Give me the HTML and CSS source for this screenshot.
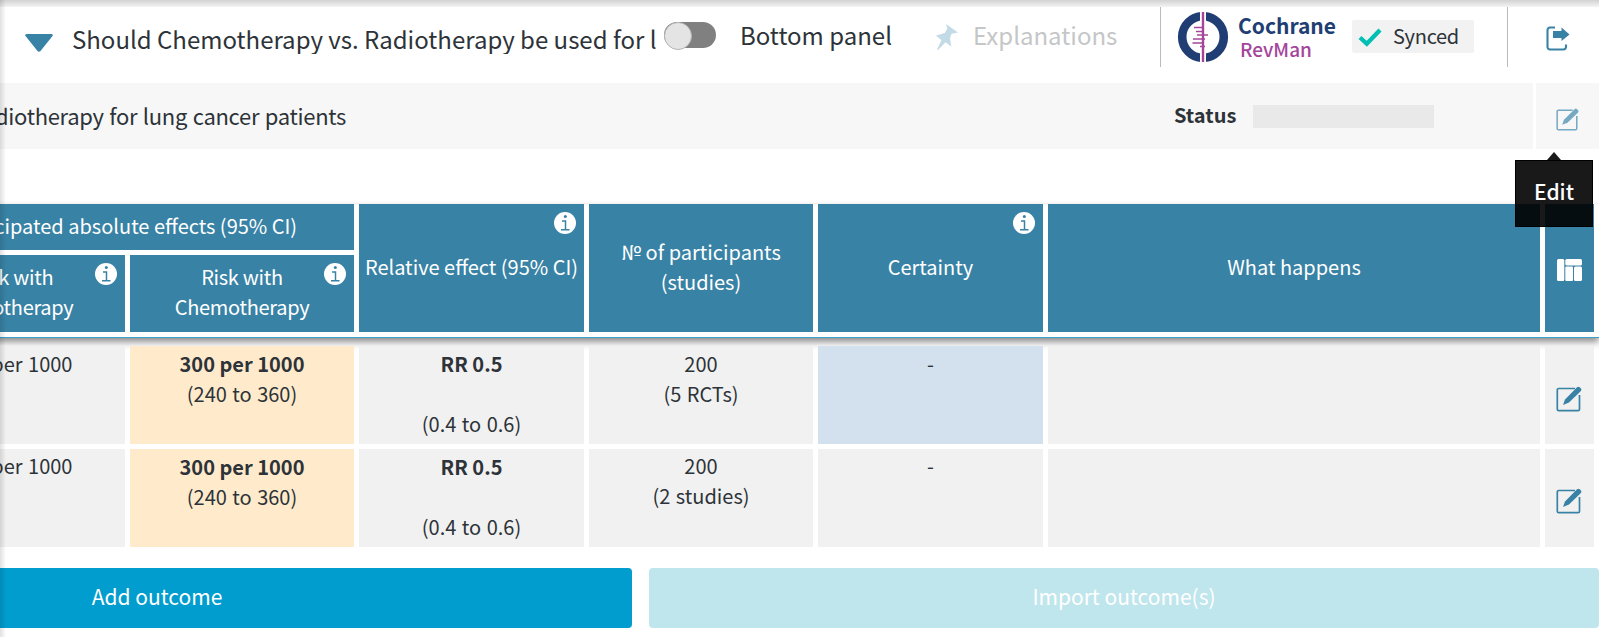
FILE: index.html
```html
<!DOCTYPE html>
<html lang="en">
<head>
  <meta charset="UTF-8">
  <title>Summary of findings</title>
  <link rel="stylesheet" href="styles.css">
</head>
<body>

  <!-- shared icons -->
  <svg class="sprite">
    <symbol id="icon-edit" viewBox="0 0 26 26">
      <path d="M23.5 9v14.2a1.5 1.5 0 0 1-1.5 1.5H2.8a1.5 1.5 0 0 1-1.5-1.5V4a1.5 1.5 0 0 1 1.5-1.5H19" fill="none" stroke="currentColor" stroke-width="1.7"/>
      <path d="M7 19l2-5.6L21 1.3q1.400-1.200 2.700 0l1.200 1.200q1.100 1.200 0 2.500L13 16.600z" fill="currentColor"/>
    </symbol>
    <symbol id="icon-info" viewBox="0 0 22 22">
      <circle cx="11" cy="11" r="11" fill="#fff"/>
      <circle cx="11.300" cy="4.500" r="1.500" fill="#3882a5"/>
      <path d="M8 9h3.500v8.500M7 17.700h8.500" fill="none" stroke="#3882a5" stroke-width="1.500"/>
    </symbol>
  </svg>

  <header class="topbar">
    <svg class="caret" viewBox="0 0 28 18"><path d="M1.500 0h25q2 .5 1 2L15.500 17q-1.500 1.500-3 0L.5 2q-1-1.500 1-2z" fill="#3882a5"/></svg>
    <div class="question">Should Chemotherapy vs. Radiotherapy be used for lung cancer patients</div>
    <div class="toggle"></div>
    <div class="toggle-label">Bottom panel</div>
    <div class="explanations">
      <svg class="pin" viewBox="0 0 22 26"><path d="M10 0L22 8.500l-6.500 1.200-1.500 4.500 1.300 8.300-5.800-4.200L2 26l-1-.8 4.500-8.900L0 11.500l8.700-2.400 2.600-4.300z" fill="currentColor"/></svg>
      <span>Explanations</span>
    </div>
    <div class="revman">
      <svg class="logo" viewBox="0 0 52 50">
        <circle cx="26" cy="25" r="20.800" fill="none" stroke="#213e74" stroke-width="8.600"/>
        <path d="M26 0v50" stroke="#fff" stroke-width="6"/>
        <path d="M26 0v50" stroke="#a4459b" stroke-width="2.400"/>
        <path d="M17 15.500h10M19 19.500h7M20 23h11M16 27h12M15.500 31h11M23 34.500h5" stroke="#a4459b" stroke-width="1.400"/>
      </svg>
      <div class="brand">
        <div class="brand-top">Cochrane</div>
        <div class="brand-bottom">RevMan</div>
      </div>
      <div class="synced">
        <svg class="check" viewBox="0 0 24 19"><path d="M2 9.500l6.800 6.300L22 2" fill="none" stroke="#00bfb3" stroke-width="4.300"/></svg>
        <span>Synced</span>
      </div>
    </div>
    <div class="export">
      <svg viewBox="0 0 24 25">
        <path d="M9 1.500H4a2.500 2.500 0 0 0-2.500 2.500v17A2.500 2.500 0 0 0 4 23.500h13.500a2.500 2.500 0 0 0 2.500-2.500v-2.500" fill="none" stroke="#3882a5" stroke-width="2.100"/>
        <path d="M7 5h8.500V1.500L23.500 8.500l-8 6.500V12H7z" fill="#3882a5"/>
      </svg>
    </div>
  </header>

  <section class="status-row">
    <div class="status-main">
      <div class="study">Chemotherapy vs. Radiotherapy for lung cancer patients</div>
      <div class="status-label">Status</div>
      <div class="status-value"></div>
    </div>
    <div class="status-edit">
      <svg><use href="#icon-edit"/></svg>
      <div class="tooltip">Edit</div>
    </div>
  </section>

  <main>
    <div class="grid head">
      <div class="th effects">Anticipated absolute effects (95% CI)</div>
      <div class="th risk">Risk with<br>Radiotherapy<svg class="info"><use href="#icon-info"/></svg></div>
      <div class="th risk">Risk with<br>Chemotherapy<svg class="info"><use href="#icon-info"/></svg></div>
      <div class="th tall">Relative effect (95% CI)<svg class="info"><use href="#icon-info"/></svg></div>
      <div class="th tall">№ of participants<br>(studies)</div>
      <div class="th tall">Certainty<svg class="info"><use href="#icon-info"/></svg></div>
      <div class="th tall">What happens</div>
      <div class="th tall columns">
        <svg viewBox="0 0 25 22" fill="#fff">
          <rect width="7.300" height="22" rx="1.500"/>
          <rect x="8.300" width="16.700" height="6.500" rx="1.500"/>
          <rect x="8.300" y="7.600" width="7.700" height="14.400" rx="1"/>
          <rect x="17" y="7.600" width="8" height="14.400" rx="1.500"/>
        </svg>
      </div>
    </div>

    <div class="grid body">
      <div class="td">600 per 1000</div>
      <div class="td estimate highlight"><b>300 per 1000</b><br>(240 to 360)</div>
      <div class="td estimate"><b>RR 0.5</b><br><br>(0.4 to 0.6)</div>
      <div class="td">200<br>(5 RCTs)</div>
      <div class="td selected">-</div>
      <div class="td"></div>
      <div class="td action"><svg><use href="#icon-edit"/></svg></div>

      <div class="td">600 per 1000</div>
      <div class="td estimate highlight"><b>300 per 1000</b><br>(240 to 360)</div>
      <div class="td estimate"><b>RR 0.5</b><br><br>(0.4 to 0.6)</div>
      <div class="td">200<br>(2 studies)</div>
      <div class="td">-</div>
      <div class="td"></div>
      <div class="td action"><svg><use href="#icon-edit"/></svg></div>
    </div>

    <div class="buttons">
      <button class="add">Add outcome</button>
      <button class="import" disabled>Import outcome(s)</button>
    </div>
  </main>

</body>
</html>
```

FILE: styles.css
```css
* {
  box-sizing: border-box;
}

body {
  margin: 0;
  width: 1599px;
  height: 637px;
  position: relative;
  overflow: hidden;
  background-color: #fff;
  color: #2d3338;
  font-family: "Noto Sans CJK SC", "Noto Sans", sans-serif;
  font-size: 20px;
  line-height: 30px;
}

/* shadows cast by the panels above and to the left */
body::before {
  content: "";
  position: absolute;
  top: 0;
  left: 0;
  width: 100%;
  height: 7px;
  background: linear-gradient(#d2d2d2, #f4f4f4);
}

body::after {
  content: "";
  position: absolute;
  top: 0;
  left: 0;
  width: 6px;
  height: 100%;
  background: linear-gradient(to right, rgba(0, 0, 0, 0.12), rgba(0, 0, 0, 0));
}

svg {
  display: block;
}

.sprite {
  display: none;
}

/* top bar */
.topbar {
  display: flex;
  align-items: flex-start;
  height: 83px;
  padding: 7px 0 0 25px;
}

.caret {
  width: 28px;
  height: 18px;
  margin-top: 27px;
}

.question {
  width: 586px;
  margin: 17px 0 0 19px;
  overflow: hidden;
  white-space: nowrap;
  font-size: 24px;
}

.toggle {
  width: 52px;
  height: 26px;
  margin: 15px 0 0 6px;
  border-radius: 13px;
  background-color: #808080;
}

.toggle::before {
  content: "";
  display: block;
  width: 26px;
  height: 26px;
  border: 1px solid #b5b5b5;
  border-radius: 50%;
  background-color: #e4e4e4;
}

.toggle-label {
  width: 170px;
  margin: 13px 0 0 24px;
  font-size: 24px;
}

.explanations {
  display: flex;
  width: 224px;
  margin-left: 26px;
  padding-top: 13px;
  font-size: 24px;
  color: #c4c6c8;
}

.pin {
  width: 22px;
  height: 26px;
  margin: 4px 15px 0 0;
  color: #c3dbe6;
}

.revman {
  display: flex;
  width: 348px;
  height: 60px;
  border-left: 1px solid #bbb;
  border-right: 1px solid #bbb;
  padding-left: 16px;
}

.logo {
  width: 52px;
  height: 50px;
  margin-top: 5px;
}

.brand {
  width: 114px;
  margin: 6px 0 0 9px;
  line-height: 24px;
}

.brand-top {
  font-size: 21px;
  font-weight: bold;
  color: #213e74;
}

.brand-bottom {
  padding-left: 2px;
  font-size: 19px;
  font-weight: 500;
  color: #a4459b;
}

.synced {
  display: flex;
  width: 122px;
  height: 33px;
  margin-top: 13px;
  padding-left: 6px;
  border-radius: 2px;
  background-color: #f2f2f2;
}

.check {
  width: 24px;
  height: 19px;
  margin: 8px 11px 0 0;
}

.synced span {
  padding-top: 1px;
  letter-spacing: -0.3px;
}

.export svg {
  width: 24px;
  height: 25px;
  margin: 19px 0 0 38px;
}

/* status row */
.status-row {
  display: flex;
  gap: 3px;
  height: 66px;
}

.status-main {
  display: flex;
  width: 1533px;
  padding-top: 17px;
  background-color: #f7f7f7;
}

.study {
  display: flex;
  justify-content: flex-end;
  width: 346px;
  overflow: hidden;
  white-space: nowrap;
  font-size: 22px;
  letter-spacing: -0.3px;
  word-spacing: 1px;
}

.status-label {
  width: 79px;
  margin-left: 828px;
  font-size: 20px;
  font-weight: bold;
}

.status-value {
  width: 181px;
  height: 23px;
  margin-top: 5px;
  background-color: #e9e9e9;
}

.status-edit {
  flex: 1;
  position: relative;
  z-index: 1;
  padding: 25px 0 0 20px;
  background-color: #f7f7f7;
  color: #74a8c3;
}

.status-edit svg {
  width: 23px;
  height: 23px;
}

.tooltip {
  position: absolute;
  top: 77px;
  left: -21px;
  width: 78px;
  height: 67px;
  padding-top: 15px;
  border: 1px solid #000;
  background-color: rgba(0, 0, 0, 0.9);
  color: #fff;
  font-size: 21px;
  font-weight: 500;
  text-align: center;
}

.tooltip::before {
  content: "";
  position: absolute;
  top: -9px;
  left: 31px;
  border: 7px solid transparent;
  border-top: 0;
  border-bottom: 8px solid #1a1a1a;
}

/* table */
.grid {
  display: grid;
  grid-template-columns: 225px 224px 225px 224px 225px 492px 49px;
  gap: 5px;
  margin-left: -100px;
  text-align: center;
}

.head {
  grid-template-rows: 46px 77px;
  height: 134px;
  margin-top: 55px;
  border-bottom: 1px solid #3a9fc9;
  box-shadow: 0 4px 7px rgba(0, 0, 0, 0.45);
}

.th {
  position: relative;
  grid-row: 2;
  display: flex;
  align-items: center;
  justify-content: center;
  padding-bottom: 2px;
  background-color: #3882a5;
  color: #fff;
  white-space: nowrap;
}

.effects {
  grid-row: 1;
  grid-column: 1 / 3;
}

.risk {
  padding-bottom: 4px;
  letter-spacing: -0.3px;
}

.tall {
  grid-row: 1 / 3;
}

.info {
  position: absolute;
  top: 8px;
  right: 8px;
  width: 22px;
  height: 22px;
}

.columns svg {
  width: 25px;
  height: 22px;
  margin-top: 6px;
}

.body {
  grid-template-rows: 98px 98px;
  row-gap: 4.2px;
  height: 201px;
  margin-top: 8.4px;
}

.td {
  padding-top: 2.5px;
  background-color: #f1f1f1;
  word-spacing: 1px;
}

.estimate {
  padding-top: 3px;
}

.td b {
  word-spacing: 0;
}

.highlight {
  background-color: #ffebcc;
}

.selected {
  background-color: #d3e0ed;
}

.action {
  padding: 39.5px 0 0 11px;
  color: #3882a5;
}

.action svg {
  width: 26px;
  height: 26px;
}

/* buttons */
.buttons {
  display: flex;
  gap: 17px;
  margin: 20.6px 0 0 -318px;
}

button {
  height: 60px;
  padding: 0 0 4px;
  border: none;
  border-radius: 4px;
  color: #fff;
  font-family: inherit;
  font-size: 21px;
}

.add {
  width: 950px;
  background-color: #009dce;
}

.import {
  width: 950px;
  background-color: #bfe6ec;
}
```
